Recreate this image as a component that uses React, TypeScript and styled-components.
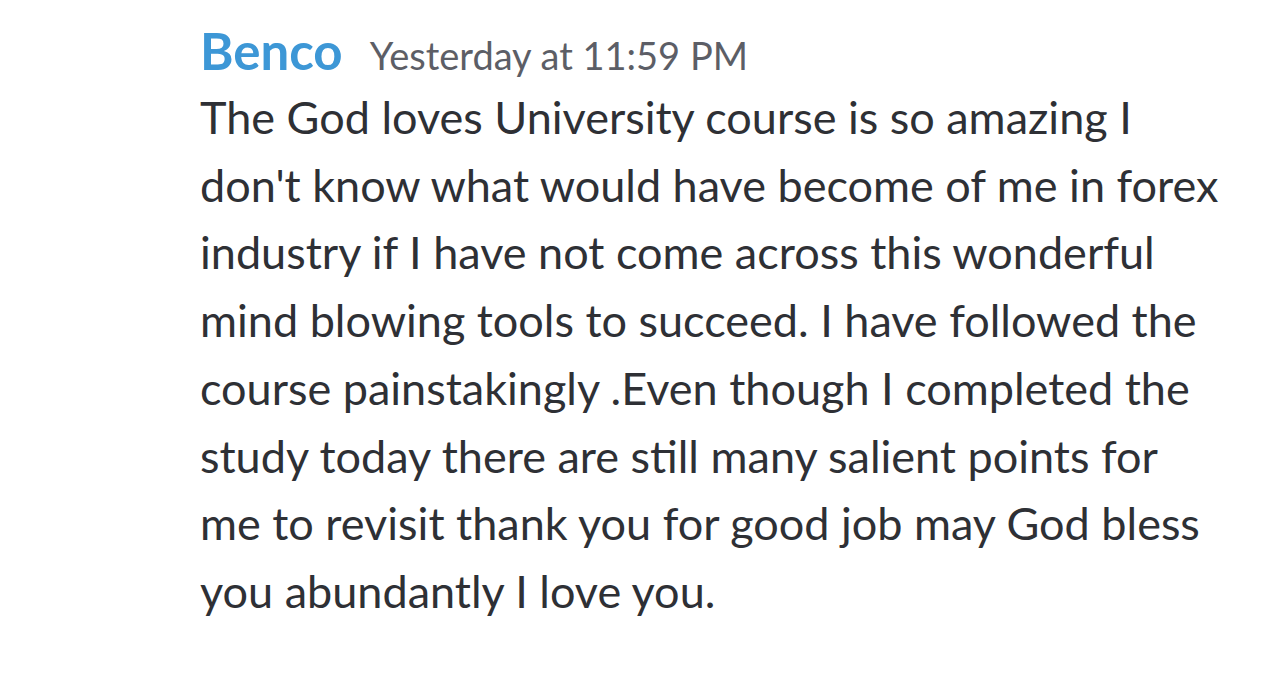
import React from "react";
import styled, { createGlobalStyle } from "styled-components";

const Global = createGlobalStyle`
  html, body { margin: 0; padding: 0; background: #ffffff; }
  body { font-family: "Lato", "Noto Sans", sans-serif; }
`;

const Page = styled.div`
  width: 1280px;
  height: 687px;
  background: #ffffff;
  box-sizing: border-box;
  padding: 20px 0 0 200px;
  overflow: hidden;
`;

const Header = styled.div`
  display: flex;
  align-items: baseline;
  gap: 27px;
  height: 64px;
`;

const Name = styled.span`
  font-size: 51px;
  font-weight: 700;
  color: #3d97d6;
`;

const Stamp = styled.span`
  font-size: 38px;
  color: #5c5e66;
`;

const Body = styled.div`
  font-size: 45px;
  line-height: 67.7px;
  color: #2e3035;
`;

const Line = styled.div`
  white-space: nowrap;
`;

const lines = [
  "The God loves University course is so amazing I",
  "don't know what would have become of me in forex",
  "industry if I have not come across this wonderful",
  "mind blowing tools to succeed. I have followed the",
  "course painstakingly .Even though I completed the",
  "study today there are still many salient points for",
  "me to revisit thank you for good job may God bless",
  "you abundantly I love you.",
];

export default function App() {
  return (
    <>
      <Global />
      <Page>
        <Header>
          <Name>Benco</Name>
          <Stamp>Yesterday at 11:59 PM</Stamp>
        </Header>
        <Body>
          {lines.map((l, i) => (
            <Line key={i}>{l}</Line>
          ))}
        </Body>
      </Page>
    </>
  );
}
